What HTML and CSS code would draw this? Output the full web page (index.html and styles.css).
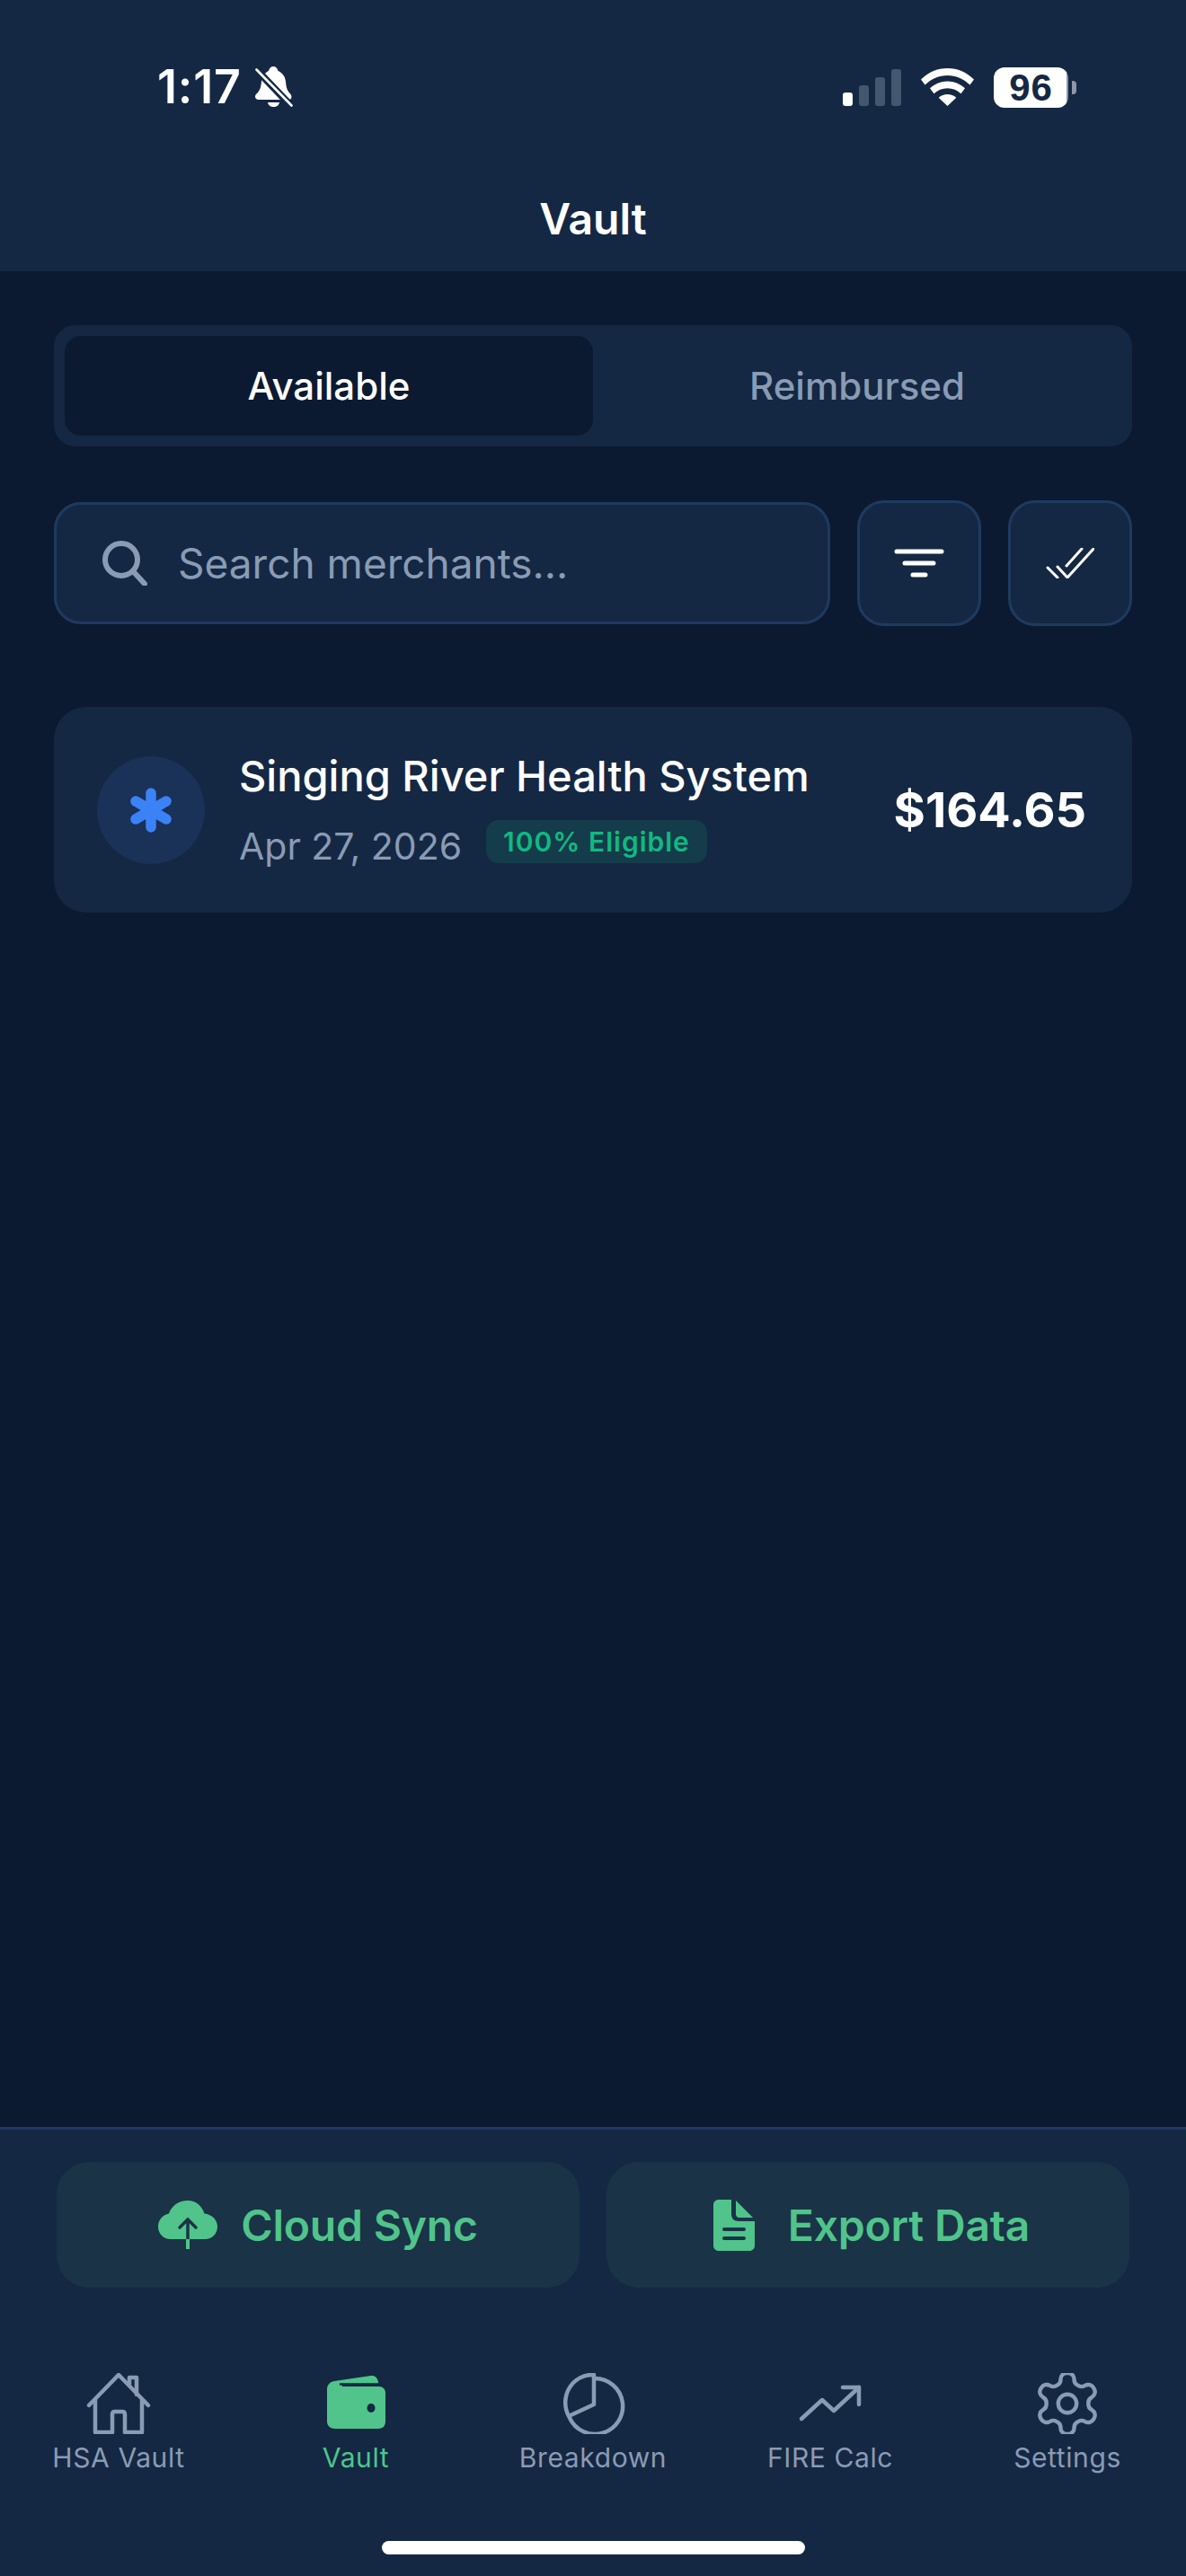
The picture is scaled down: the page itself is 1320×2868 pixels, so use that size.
FILE: index.html
```html
<!DOCTYPE html>
<html>
<head>
  <title>Vault</title>
  <link rel="stylesheet" href="styles.css">
</head>
<body>

<div class="page">
  <header class="top">
    <div class="status">
      <div class="status-left">
        <span class="time">1:17</span>
        <svg class="bell" width="42" height="46" viewBox="0 0 42 46">
          <path fill="#fff" d="M20 0c3 0 5 2 5.500 5 5 2 8 6.500 8.500 12 .5 5 1 8 3 11 1.500 2 3.500 3.500 3.500 6 0 2-1.500 3-3.500 3H4c-2.500 0-4-1.500-4-3.500 0-2.500 2.500-3.500 4-6 2-3 2.500-6 3-10.500 .5-5.500 3.500-10 8-12 .5-3 2.500-5 5-5z"/>
          <path fill="#fff" d="M14 40h13c-.5 3-3 5-6.500 5S14.500 43 14 40z"/>
          <path stroke="#142843" stroke-width="8" d="M-1 1l42 44"/>
          <path stroke="#fff" stroke-width="2.600" stroke-linecap="round" d="M1.500 3.500l39 40"/>
        </svg>
      </div>
      <div class="status-right">
        <div class="signal">
          <i class="bar bar-1"></i><i class="bar bar-2"></i><i class="bar bar-3"></i><i class="bar bar-4"></i>
        </div>
        <svg class="wifi" width="59" height="42" viewBox="0 0 59 42">
          <path fill="#fff" d="M29.500 0C41 0 51 4.500 59 12.500l-4.500 6C47.500 12 39 8 29.500 8S11.500 12 4.500 18.500L0 12.500C8 4.500 18 0 29.500 0z"/>
          <path fill="#fff" d="M29.500 14.500c7.500 0 14 2.800 19.500 7.800l-4.500 6c-4-3.800-9.200-6-15-6s-11 2.200-15 6l-4.500-6c5.500-5 12-7.800 19.500-7.800z"/>
          <path fill="#fff" d="M29.500 29c3.700 0 7 1.300 9.800 3.700L29.500 42l-9.800-9.300c2.800-2.400 6.100-3.700 9.800-3.700z"/>
        </svg>
        <div class="battery">
          <div class="battery-body">96</div>
          <i class="battery-nub"></i>
        </div>
      </div>
    </div>
    <h1 class="title">Vault</h1>
  </header>

  <main class="content">
    <div class="segments">
      <div class="segment active">Available</div>
      <div class="segment">Reimbursed</div>
    </div>

    <div class="tools">
      <div class="search">
        <svg width="50" height="50" viewBox="0 0 50 50" fill="none" stroke="#8a9bb4" stroke-width="6" stroke-linecap="round">
          <circle cx="21" cy="21" r="18"/>
          <path d="M35 35l12 13"/>
        </svg>
        <span class="placeholder">Search merchants...</span>
      </div>
      <div class="tool-btn">
        <svg width="56" height="34" viewBox="0 0 56 34" fill="none" stroke="#fff" stroke-width="5" stroke-linecap="round">
          <path d="M3 4h50M12 17h32M21 30h14"/>
        </svg>
      </div>
      <div class="tool-btn">
        <svg width="54" height="34" viewBox="0 0 54 34" fill="none" stroke="#fff" stroke-width="3" stroke-linecap="round" stroke-linejoin="round">
          <path d="M2 22l11 11M13 21l11 12 29-32M23 20L40 1"/>
        </svg>
      </div>
    </div>

    <div class="card">
      <div class="card-icon">
        <svg width="48" height="50" viewBox="0 0 48 50" fill="none" stroke="#3b82f6" stroke-width="11.500" stroke-linecap="round">
          <path d="M24 6v38M7 15l34 20M41 15L7 35"/>
        </svg>
      </div>
      <div class="card-body">
        <div class="merchant">Singing River Health System</div>
        <div class="meta">
          <span class="date">Apr 27, 2026</span>
          <span class="badge">100% Eligible</span>
        </div>
      </div>
      <div class="amount">$164.65</div>
    </div>
  </main>

  <footer class="bottom">
    <div class="actions">
      <div class="action">
        <svg width="66" height="54" viewBox="0 0 66 54">
          <path fill="#50c48a" d="M33 0c9 0 16 6 18.500 14.500C60 15.500 66 21.500 66 29c0 8-6 14-14 14H14C6 43 0 37 0 29c0-7.500 5-13 12-14.500C14.500 6 23 0 33 0z"/>
          <path fill="none" stroke="#1a3347" stroke-width="3.500" stroke-linecap="round" d="M33 43V21M24 30l9-9 9 9"/>
          <path fill="none" stroke="#50c48a" stroke-width="4" d="M33 43v11"/>
        </svg>
        <span>Cloud Sync</span>
      </div>
      <div class="action action-export">
        <svg width="46" height="57" viewBox="0 0 46 57">
          <path fill="#50c48a" d="M6 0h14v16c0 5 3 8 8 8h18v27c0 3.500-2.500 6-6 6H6c-3.500 0-6-2.500-6-6V6c0-3.500 2.500-6 6-6z"/>
          <path fill="#50c48a" d="M25 1l19 19H29c-2.500 0-4-1.500-4-4z"/>
          <path stroke="#1a3347" stroke-width="4" stroke-linecap="round" d="M12 33h22M12 43h22"/>
        </svg>
        <span>Export Data</span>
      </div>
    </div>

    <nav class="tabs">
      <div class="tab">
        <svg width="72" height="68" viewBox="0 0 72 68" fill="none" stroke="#8a9bb4" stroke-width="4.500" stroke-linecap="round" stroke-linejoin="round">
          <path d="M3 36L36 2l33 34"/>
          <path d="M10 30v36h19V46c0-2 1-3 3-3h8c2 0 3 1 3 3v20h19V30"/>
          <path d="M48 13V5h8v19"/>
        </svg>
        <span>HSA Vault</span>
      </div>
      <div class="tab active">
        <svg width="72" height="68" viewBox="0 0 72 68">
          <path fill="#50c48a" d="M12 9L53 3c4-.5 7 2 8 7l.5 3H14z"/>
          <path fill="#50c48a" d="M13 9h8v6h41c4 0 7 3 7 7v32c0 5-3 8-8 8H13c-5 0-9-3-9-8V18c0-5 4-9 9-9z"/>
          <path stroke="#142843" stroke-width="2.500" d="M18 12.500h44"/>
          <ellipse cx="53" cy="39" rx="4.500" ry="5" fill="#142843"/>
        </svg>
        <span>Vault</span>
      </div>
      <div class="tab">
        <svg width="72" height="68" viewBox="0 0 72 68" fill="none" stroke="#8a9bb4" stroke-width="4.500" stroke-linecap="round" stroke-linejoin="round">
          <path d="M38 6a31 31 0 1 1-28 44"/>
          <path d="M37 2A30 31 0 0 0 9 48l28-13z"/>
        </svg>
        <span>Breakdown</span>
      </div>
      <div class="tab">
        <svg width="72" height="68" viewBox="0 0 72 68" fill="none" stroke="#8a9bb4" stroke-width="4.500" stroke-linecap="round" stroke-linejoin="round">
          <path d="M4 51l23-21 13 12 28-26"/>
          <path d="M50 16h18v19"/>
        </svg>
        <span>FIRE Calc</span>
      </div>
      <div class="tab">
        <svg width="72" height="68" viewBox="2 2 20 20" fill="none" stroke="#8a9bb4" stroke-width="1.300" stroke-linecap="round" stroke-linejoin="round">
          <circle cx="12" cy="12" r="3"/>
          <path d="M12.220 2h-.44a2 2 0 0 0-2 2v.18a2 2 0 0 1-1 1.730l-.43.25a2 2 0 0 1-2 0l-.15-.08a2 2 0 0 0-2.730.73l-.22.38a2 2 0 0 0 .73 2.730l.15.1a2 2 0 0 1 1 1.720v.51a2 2 0 0 1-1 1.740l-.15.09a2 2 0 0 0-.73 2.730l.22.38a2 2 0 0 0 2.730.73l.15-.08a2 2 0 0 1 2 0l.43.25a2 2 0 0 1 1 1.730V20a2 2 0 0 0 2 2h.44a2 2 0 0 0 2-2v-.18a2 2 0 0 1 1-1.730l.43-.25a2 2 0 0 1 2 0l.15.08a2 2 0 0 0 2.730-.73l.22-.39a2 2 0 0 0-.73-2.730l-.15-.08a2 2 0 0 1-1-1.740v-.5a2 2 0 0 1 1-1.740l.15-.09a2 2 0 0 0 .73-2.730l-.22-.38a2 2 0 0 0-2.730-.73l-.15.08a2 2 0 0 1-2 0l-.43-.25a2 2 0 0 1-1-1.730V4a2 2 0 0 0-2-2z"/>
        </svg>
        <span>Settings</span>
      </div>
    </nav>

    <div class="home-bar"></div>
  </footer>
</div>

</body>
</html>
```

FILE: styles.css
```css
body {
  margin: 0;
  background: #0b1a30;
  font-family: Inter, "Noto Sans", sans-serif;
  color: #fff;
}

.page {
  height: 2868px;
  display: flex;
  flex-direction: column;
  overflow: hidden;
}

/* top bar */
.top {
  height: 302px;
  background: #142843;
  box-sizing: border-box;
}

.status {
  height: 46px;
  padding: 74px 122px 0 175px;
  display: flex;
  justify-content: space-between;
  align-items: center;
}

.status-left {
  display: flex;
  align-items: center;
  gap: 15px;
}

.time {
  font-size: 52px;
  font-weight: 600;
  letter-spacing: .8px;
  line-height: 46px;
}

.status-right {
  display: flex;
  align-items: flex-end;
  gap: 22px;
}

.signal {
  display: flex;
  align-items: flex-end;
  gap: 7px;
  height: 41px;
  margin-bottom: 2px;
}

.bar {
  width: 11px;
  border-radius: 3px;
  background: #45566f;
}

.bar-1 { height: 15px; background: #fff; }
.bar-2 { height: 23px; }
.bar-3 { height: 32px; }
.bar-4 { height: 41px; }

.wifi {
  margin-bottom: 2px;
}

.battery {
  display: flex;
  align-items: center;
  gap: 4px;
}

.battery-body {
  width: 83px;
  height: 45px;
  border-radius: 12px;
  background: linear-gradient(90deg, #fff 97%, #8d97a8 97%);
  color: #142843;
  font-family: "Liberation Sans", sans-serif;
  font-weight: 700;
  font-size: 42px;
  letter-spacing: 1px;
  line-height: 45px;
  text-align: center;
}

.battery-nub {
  width: 5px;
  height: 15px;
  border-radius: 0 4px 4px 0;
  background: #8d97a8;
}

.title {
  margin: 95px 0 0;
  font-size: 48px;
  font-weight: 600;
  line-height: 58px;
  text-align: center;
}

/* main list */
.content {
  flex: 1;
  padding: 60px 60px 0;
}

.segments {
  display: flex;
  height: 135px;
  box-sizing: border-box;
  padding: 12px;
  border-radius: 24px;
  background: #142843;
}

.segment {
  flex: 1;
  display: flex;
  align-items: center;
  justify-content: center;
  border-radius: 18px;
  font-size: 42px;
  font-weight: 500;
  color: #8a9bb4;
}

.segment.active {
  background: #0b1a30;
  color: #fff;
}

.tools {
  display: flex;
  align-items: center;
  gap: 30px;
  margin-top: 60px;
}

.search {
  flex: 1;
  height: 136px;
  box-sizing: border-box;
  padding-left: 51px;
  display: flex;
  align-items: center;
  gap: 34px;
  border: 3px solid #1f3a5f;
  border-radius: 30px;
  background: #142843;
}

.placeholder {
  font-size: 46px;
  color: #8a9bb4;
}

.tool-btn {
  width: 138px;
  height: 140px;
  box-sizing: border-box;
  display: flex;
  align-items: center;
  justify-content: center;
  border: 3px solid #1f3a5f;
  border-radius: 30px;
  background: #142843;
}

.card {
  height: 229px;
  box-sizing: border-box;
  margin-top: 90px;
  padding: 0 51px 0 48px;
  display: flex;
  align-items: center;
  border-radius: 36px;
  background: #142843;
}

.card-icon {
  width: 120px;
  height: 120px;
  flex: none;
  display: flex;
  align-items: center;
  justify-content: center;
  border-radius: 50%;
  background: #1a3158;
}

.card-body {
  flex: 1;
  margin-left: 38px;
  padding-bottom: 5px;
}

.merchant {
  margin-top: 5px;
  font-size: 47px;
  font-weight: 500;
  line-height: 56px;
}

.meta {
  display: flex;
  align-items: center;
  gap: 27px;
  margin-top: 15px;
}

.date {
  margin-top: 10px;
  font-size: 41px;
  color: #8a9bb4;
}

.badge {
  height: 48px;
  box-sizing: border-box;
  padding: 0 19px;
  display: flex;
  align-items: center;
  border-radius: 14px;
  background: #143c4b;
  color: #10b981;
  font-size: 30px;
  font-weight: 600;
  letter-spacing: 1px;
}

.amount {
  font-size: 54px;
  font-weight: 700;
}

/* bottom actions and tab bar */
.bottom {
  height: 500px;
  box-sizing: border-box;
  border-top: 3px solid #1f3a5f;
  background: #142843;
}

.actions {
  display: grid;
  grid-template-columns: 1fr 1fr;
  gap: 30px;
  padding: 36px 63px 0;
}

.action {
  height: 140px;
  display: flex;
  align-items: center;
  justify-content: center;
  gap: 26px;
  border-radius: 36px;
  background: #1a3347;
  color: #50c48a;
  font-size: 48px;
  font-weight: 600;
  letter-spacing: -.2px;
}

.action-export {
  gap: 37px;
  padding-left: 8px;
}

.tabs {
  display: flex;
  justify-content: space-between;
  margin-top: 95px;
}

.tab {
  width: 264px;
  display: flex;
  flex-direction: column;
  align-items: center;
  font-size: 30px;
  letter-spacing: .6px;
  line-height: 36px;
  color: #8a9bb4;
}

.tab svg {
  margin-bottom: 8px;
}

.tab.active {
  color: #50c48a;
}

.home-bar {
  width: 471px;
  height: 15px;
  margin: 75px auto 0;
  border-radius: 8px;
  background: #fff;
}
```
